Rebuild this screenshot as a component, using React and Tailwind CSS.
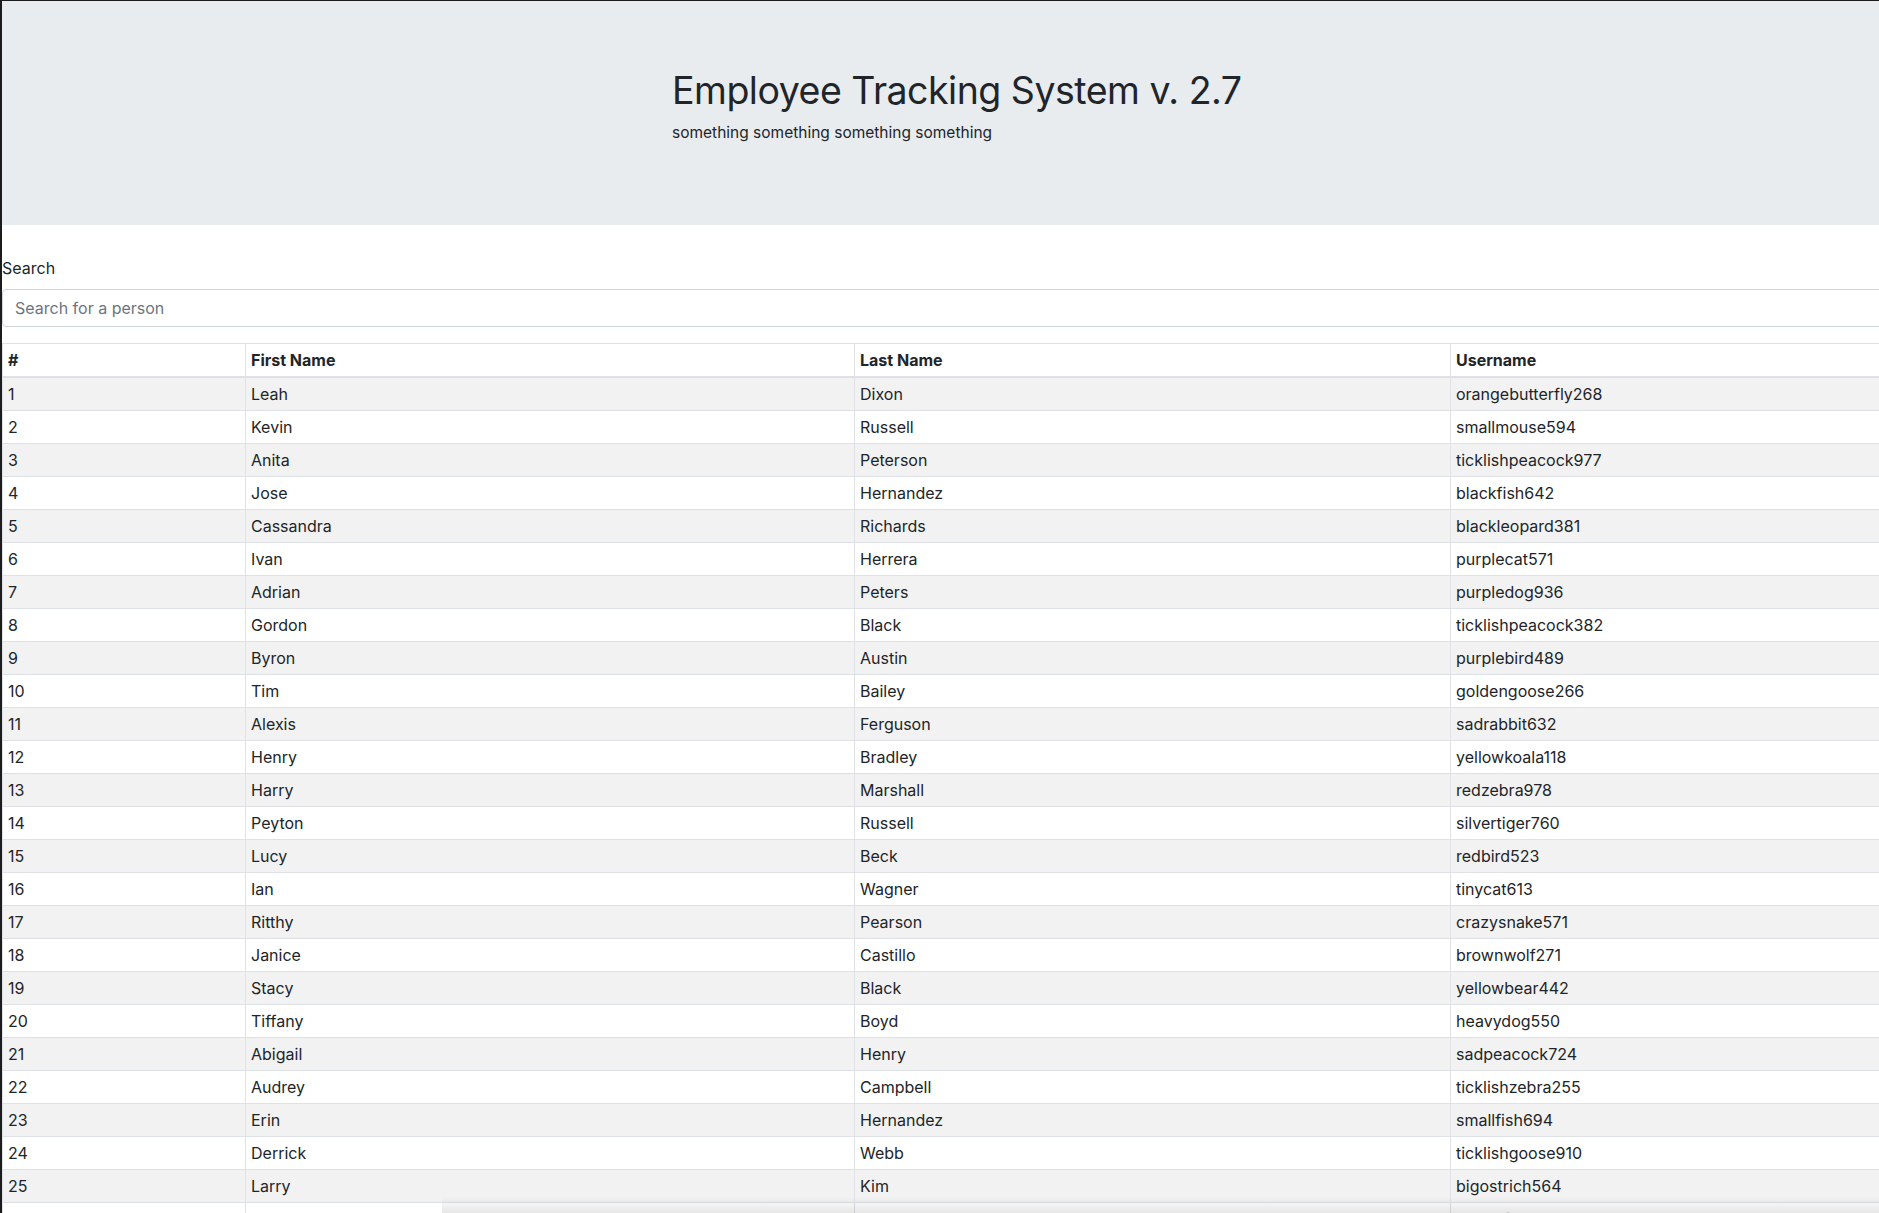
import React from 'react';

const people = [
  ['Leah', 'Dixon', 'orangebutterfly268'],
  ['Kevin', 'Russell', 'smallmouse594'],
  ['Anita', 'Peterson', 'ticklishpeacock977'],
  ['Jose', 'Hernandez', 'blackfish642'],
  ['Cassandra', 'Richards', 'blackleopard381'],
  ['Ivan', 'Herrera', 'purplecat571'],
  ['Adrian', 'Peters', 'purpledog936'],
  ['Gordon', 'Black', 'ticklishpeacock382'],
  ['Byron', 'Austin', 'purplebird489'],
  ['Tim', 'Bailey', 'goldengoose266'],
  ['Alexis', 'Ferguson', 'sadrabbit632'],
  ['Henry', 'Bradley', 'yellowkoala118'],
  ['Harry', 'Marshall', 'redzebra978'],
  ['Peyton', 'Russell', 'silvertiger760'],
  ['Lucy', 'Beck', 'redbird523'],
  ['Ian', 'Wagner', 'tinycat613'],
  ['Ritthy', 'Pearson', 'crazysnake571'],
  ['Janice', 'Castillo', 'brownwolf271'],
  ['Stacy', 'Black', 'yellowbear442'],
  ['Tiffany', 'Boyd', 'heavydog550'],
  ['Abigail', 'Henry', 'sadpeacock724'],
  ['Audrey', 'Campbell', 'ticklishzebra255'],
  ['Erin', 'Hernandez', 'smallfish694'],
  ['Derrick', 'Webb', 'ticklishgoose910'],
  ['Larry', 'Kim', 'bigostrich564'],
  ['Kathy', 'Robertson', 'brownfrog142'],
];

const App = () => {
  return (
    <div
      className="relative w-[1879px] h-[1213px] overflow-hidden bg-white border-l-2 border-t border-[#1c1c1c] text-[#212529]"
      style={{ fontFamily: 'Inter, "Noto Sans", sans-serif' }}
    >
      {/* Jumbotron */}
      <div className="h-[224px] bg-[#e9ecef] pl-[670px] pt-[67px]">
        <h1 className="text-[37.5px] leading-[1.2] font-normal tracking-[-0.5px]">Employee Tracking System v. 2.7</h1>
        <p className="mt-[8px] text-[15.5px] leading-[24px]">something something something something</p>
      </div>

      {/* Search */}
      <div className="pt-[31px]">
        <label className="block text-[16px] leading-[24px]">Search</label>
        <input
          type="text"
          placeholder="Search for a person"
          className="mt-[9px] block w-[2000px] h-[38px] px-[12px] border border-[#ced4da] rounded-[4px] text-[16px] placeholder:text-[#6c757d] outline-none"
        />
      </div>

      {/* Table */}
      <table className="mt-[16px] w-[2050px] border-collapse table-fixed text-[16px] leading-[24px]">
        <colgroup>
          <col className="w-[243px]" />
          <col className="w-[609px]" />
          <col className="w-[596px]" />
          <col className="w-[602px]" />
        </colgroup>
        <thead>
          <tr>
            <th className="border border-[#dee2e6] border-b-2 px-[5px] py-[4px] text-left font-bold">#</th>
            <th className="border border-[#dee2e6] border-b-2 px-[5px] py-[4px] text-left font-bold">First Name</th>
            <th className="border border-[#dee2e6] border-b-2 px-[5px] py-[4px] text-left font-bold">Last Name</th>
            <th className="border border-[#dee2e6] border-b-2 px-[5px] py-[4px] text-left font-bold">Username</th>
          </tr>
        </thead>
        <tbody>
          {people.map((p, i) => (
            <tr key={i} className={i % 2 === 0 ? 'bg-[#f2f2f2]' : 'bg-white'}>
              <td className="border border-[#dee2e6] px-[5px] py-[4px]">{i + 1}</td>
              <td className="border border-[#dee2e6] px-[5px] py-[4px]">{p[0]}</td>
              <td className="border border-[#dee2e6] px-[5px] py-[4px]">{p[1]}</td>
              <td className="border border-[#dee2e6] px-[5px] py-[4px]">{p[2]}</td>
            </tr>
          ))}
        </tbody>
      </table>

      {/* window shadow at the bottom edge */}
      <div className="absolute left-[440px] right-0 bottom-0 h-[16px] bg-gradient-to-b from-transparent to-black/10" />
    </div>
  );
};

export default App;
